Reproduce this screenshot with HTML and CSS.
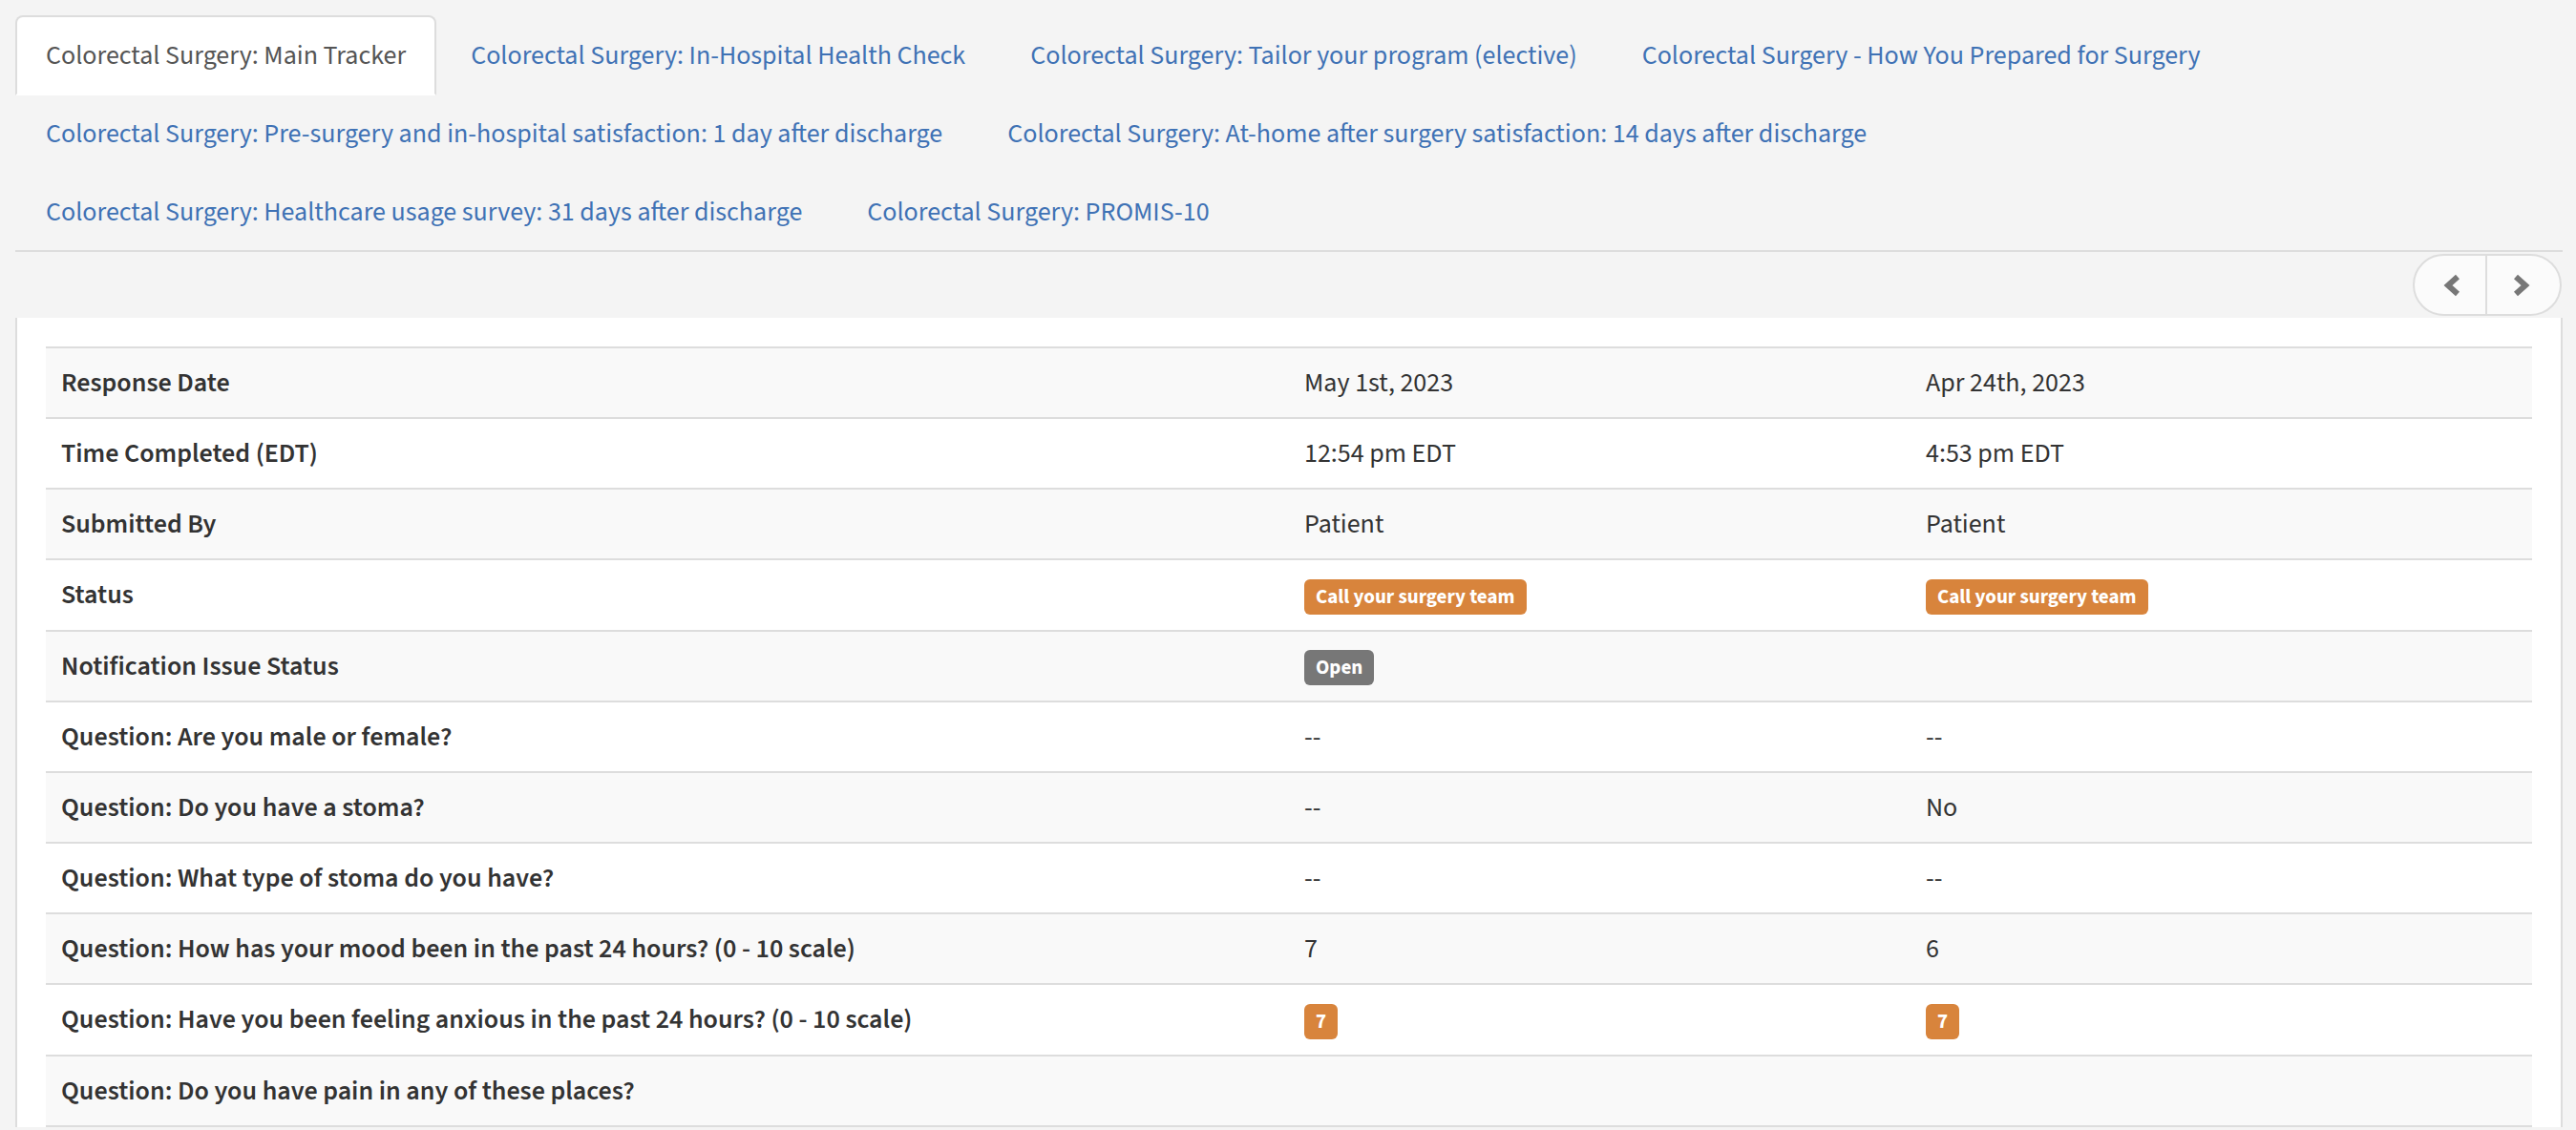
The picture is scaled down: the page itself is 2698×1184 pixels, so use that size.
FILE: index.html
```html
<!DOCTYPE html>
<html lang="en">
<head>
<meta charset="utf-8">
<title>Colorectal Surgery: Main Tracker</title>
<link rel="stylesheet" href="styles.css">
</head>
<body>
<div class="page">
  <ul class="tabs">
    <li class="tab active"><a href="#">Colorectal Surgery: Main Tracker</a></li>
    <li class="tab"><a href="#">Colorectal Surgery: In-Hospital Health Check</a></li>
    <li class="tab"><a href="#">Colorectal Surgery: Tailor your program (elective)</a></li>
    <li class="tab"><a href="#">Colorectal Surgery - How You Prepared for Surgery</a></li>
    <li class="tab"><a href="#">Colorectal Surgery: Pre-surgery and in-hospital satisfaction: 1 day after discharge</a></li>
    <li class="tab"><a href="#">Colorectal Surgery: At-home after surgery satisfaction: 14 days after discharge</a></li>
    <li class="tab"><a href="#">Colorectal Surgery: Healthcare usage survey: 31 days after discharge</a></li>
    <li class="tab"><a href="#">Colorectal Surgery: PROMIS-10</a></li>
  </ul>

  <div class="toolbar">
    <div class="btn-group">
      <button class="btn btn-prev" type="button" aria-label="Previous">
        <svg viewBox="0 0 20 24" width="20" height="24"><polyline points="15,3 5,12 15,21" fill="none" stroke="#777" stroke-width="6" stroke-linejoin="miter"/></svg>
      </button>
      <button class="btn btn-next" type="button" aria-label="Next">
        <svg viewBox="0 0 20 24" width="20" height="24"><polyline points="5,3 15,12 5,21" fill="none" stroke="#777" stroke-width="6" stroke-linejoin="miter"/></svg>
      </button>
    </div>
  </div>

  <div class="panel">
    <table class="data">
      <colgroup>
        <col class="c-label">
        <col class="c-val">
        <col class="c-val">
      </colgroup>
      <tbody>
        <tr><td class="label">Response Date</td><td>May 1st, 2023</td><td>Apr 24th, 2023</td></tr>
        <tr><td class="label">Time Completed (EDT)</td><td>12:54 pm EDT</td><td>4:53 pm EDT</td></tr>
        <tr><td class="label">Submitted By</td><td>Patient</td><td>Patient</td></tr>
        <tr><td class="label">Status</td><td><span class="badge warn">Call your surgery team</span></td><td><span class="badge warn">Call your surgery team</span></td></tr>
        <tr><td class="label">Notification Issue Status</td><td><span class="badge muted">Open</span></td><td></td></tr>
        <tr><td class="label">Question: Are you male or female?</td><td>--</td><td>--</td></tr>
        <tr><td class="label">Question: Do you have a stoma?</td><td>--</td><td>No</td></tr>
        <tr><td class="label">Question: What type of stoma do you have?</td><td>--</td><td>--</td></tr>
        <tr><td class="label">Question: How has your mood been in the past 24 hours? (0 - 10 scale)</td><td>7</td><td>6</td></tr>
        <tr><td class="label">Question: Have you been feeling anxious in the past 24 hours? (0 - 10 scale)</td><td><span class="badge warn">7</span></td><td><span class="badge warn">7</span></td></tr>
        <tr><td class="label">Question: Do you have pain in any of these places?</td><td></td><td></td></tr>
      </tbody>
    </table>
  </div>
</div>
</body>
</html>
```

FILE: styles.css
```css
* { box-sizing: border-box; }

html, body {
  margin: 0;
  padding: 0;
  background: #f4f4f4;
}

body {
  font-family: "Source Sans Pro", "Source Sans 3", Lato, "Liberation Sans", sans-serif;
  color: #333;
}

.page {
  padding: 16px 14px 0 16px;
}

/* Tabs */
.tabs {
  list-style: none;
  margin: 0;
  padding: 0;
  display: flex;
  flex-wrap: wrap;
  border-bottom: 2px solid #ddd;
}

.tab {
  margin: 0 4px -2px 0;
}

.tab a {
  display: block;
  padding: 20px 30px;
  line-height: 40px;
  font-size: 28px;
  color: #3f72b5;
  text-decoration: none;
  border: 2px solid transparent;
  border-radius: 8px 8px 0 0;
  white-space: nowrap;
}

.tab.active a {
  background: #fff;
  color: #555;
  border-color: #ddd;
  border-bottom-color: transparent;
}

/* Pager */
.toolbar {
  display: flex;
  justify-content: flex-end;
  padding: 2px 1px 2px 0;
}

.btn-group {
  display: flex;
}

.btn {
  height: 65px;
  background: #fbfbfb;
  border: 2px solid #ddd;
  display: flex;
  align-items: center;
  justify-content: center;
  padding: 0;
  cursor: pointer;
}

.btn-prev {
  width: 78px;
  border-radius: 33px 0 0 33px;
  padding-left: 6px;
}

.btn-next {
  width: 78px;
  border-left: none;
  border-radius: 0 33px 33px 0;
  padding-right: 6px;
}

/* Panel and table */
.panel {
  background: #fff;
  border-left: 2px solid #ddd;
  border-right: 2px solid #ddd;
  padding: 30px 30px 0 30px;
}

.data {
  width: 100%;
  border-collapse: collapse;
  font-size: 28px;
  line-height: 40px;
  border-bottom: 2px solid #ddd;
}

.c-label { width: 50%; }
.c-val { width: 25%; }

.data td {
  border-top: 2px solid #ddd;
  padding: 16px;
  vertical-align: top;
  height: 74px;
}

.data tbody tr:nth-child(odd) {
  background: #f9f9f9;
}

.data td.label {
  font-weight: 600;
}

.badge {
  display: inline-block;
  font-size: 21px;
  font-weight: 700;
  line-height: 21px;
  padding: 8px 12px 8px;
  border-radius: 6px;
  color: #fff;
  vertical-align: middle;
}

.badge.warn { background: #d8843c; }
.badge.muted { background: #777; }
```
